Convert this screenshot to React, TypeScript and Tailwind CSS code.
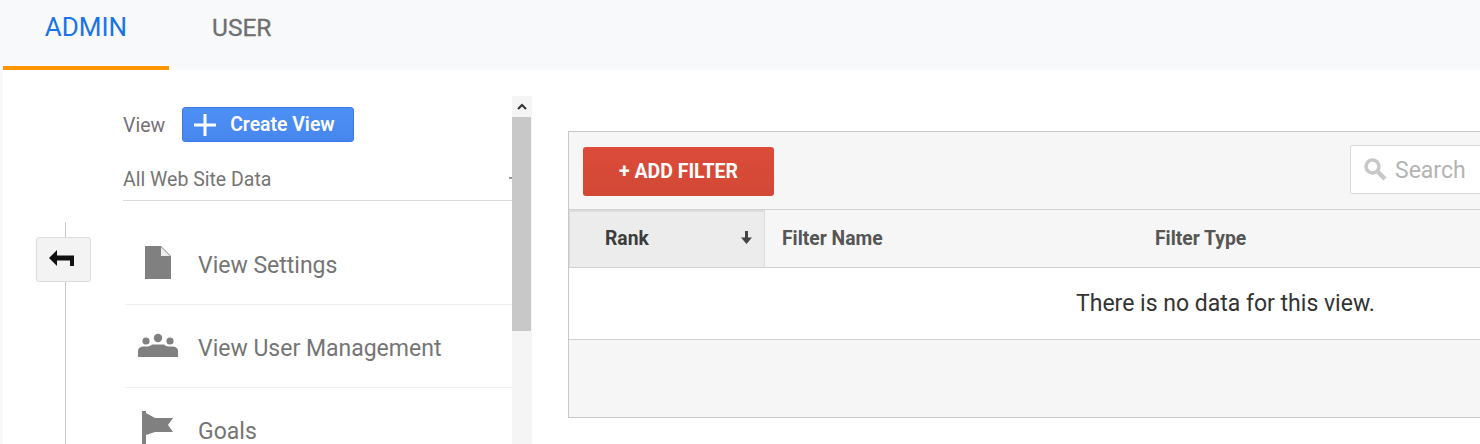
export default function App() {
  const menu = [
    { label: "View Settings", icon: <svg width="26" height="33" viewBox="0 0 26 33"><path d="M0 0H16L26 10V33H0Z" fill="#808080" /><path d="M16 1L25 10H16Z" fill="#ececec" /></svg>, h: "h-[83px]" },
    {
      label: "View User Management",
      icon: (
        <svg width="40" height="26" viewBox="0 0 40 26">
          <circle cx="8" cy="9" r="3.600" fill="#808080" />
          <circle cx="20" cy="6" r="4.200" fill="#808080" />
          <circle cx="32" cy="9" r="3.600" fill="#808080" />
          <path d="M0 25V19Q0 15 5 14.500H10Q13 14 14 12.500H26Q27 14 30 14.500H35Q40 15 40 19V25Z" fill="#808080" />
        </svg>
      ),
      h: "h-[83px]",
    },
    {
      label: "Goals",
      icon: <svg width="34" height="34" viewBox="0 0 34 34"><path d="M1 0H5V34H1Z" fill="#808080" /><path d="M5 2L14 7H32L27 14L32 21H14L5 24Z" fill="#808080" /></svg>,
      h: "h-[60px]",
    },
  ];

  return (
    <div className="flex h-[444px] w-[1480px] flex-col overflow-hidden bg-white font-['Roboto',sans-serif]">
      <div className="flex h-[70px] shrink-0 bg-[#f8f9fa] pl-[3px]">
        <div className="flex h-full w-[166px] items-center justify-center border-b-4 border-[#ff9800] pb-[12px] text-[26px] text-[#1a73e8]">ADMIN</div>
        <div className="ml-[43px] flex h-full items-center pb-[14px] text-[24.500px] text-[#6f6f6f] [-webkit-text-stroke:0.3px_#6f6f6f]">USER</div>
      </div>

      <div className="flex min-h-0 flex-1 border-l-[3px] border-[#f8f9fa]">
        <div className="relative w-[117px] shrink-0">
          <div className="ml-[62px] mt-[152px] h-full w-px bg-[#c8c8c8]" />
          <div className="absolute left-[33px] top-[167px] flex h-[45px] w-[55px] items-start justify-center rounded-[3px] border border-[#dcdcdc] bg-[#f3f3f3] pr-[3px] pt-[12px]">
            <svg width="26" height="17" viewBox="0 0 26 17">
              <path d="M0 8L8 0V5.500H25V16H21V10.500H8V16Z" fill="#111" />
            </svg>
          </div>
        </div>

        <div className="w-[392px] shrink-0">
          <div className="ml-[3px] flex h-[86px] flex-col pt-[37px]">
            <div className="flex items-center">
              <span className="pt-[3px] text-[19.500px] text-[#776f78]">View</span>
              <button className="ml-[17px] flex h-[35px] w-[172px] items-center rounded-[3px] border border-[#3b78e7] bg-linear-to-b from-[#4d90f5] to-[#4787ed] pl-[11px] text-white">
                <svg width="22" height="22" viewBox="0 0 22 22" className="shrink-0">
                  <path d="M9.500 0H12.500V9.500H22V12.500H12.500V22H9.500V12.500H0V9.500H9.500Z" fill="#fff" />
                </svg>
                <span className="ml-[14px] text-[19.400px] font-semibold">Create View</span>
              </button>
            </div>
          </div>
          <div className="relative ml-[3px] flex h-[45px] items-start border-b border-[#dbdbdb] pt-[13px] text-[19.500px] leading-[22px] text-[#757575]">
            All Web Site Data
            <span className="absolute right-0 top-[21px] h-[2px] w-[3px] bg-[#999]" />
          </div>
          <div className="ml-[5px] mt-[21px]">
            {menu.map((m, i) => (
              <div key={m.label} className={`flex ${m.h} items-start pt-[17px] ${i < 2 ? "border-b border-[#efefef]" : ""}`}>
                <div className="flex h-[46px] w-[73px] shrink-0 items-center justify-center pr-[7px]">{m.icon}</div>
                <span className="pt-[13px] text-[23px] leading-[28px] text-[#757575]">{m.label}</span>
              </div>
            ))}
          </div>
        </div>

        <div className="mt-[26px] flex w-[20px] shrink-0 flex-col bg-[#f5f5f5]">
          <div className="flex h-[21px] items-center justify-center">
            <svg width="10" height="7" viewBox="0 0 10 7">
              <path d="M1 6L5 2L9 6" fill="none" stroke="#333" strokeWidth="2" />
            </svg>
          </div>
          <div className="h-[214px] w-[19px] bg-[#c8c8c8]" />
        </div>

        <div className="ml-[36px] mt-[61px] h-[287px] flex-1 border-y border-l border-[#c8c8c8] text-[#555]">
          <div className="flex h-[78px] items-start justify-between border-b border-[#d2d2d2] bg-[#f6f6f6] pl-[14px] pt-[15px]">
            <button className="h-[49px] w-[191px] rounded-[3px] bg-linear-to-b from-[#dd4b39] to-[#d14836] text-[19.500px] font-bold text-white">+ ADD FILTER</button>
            <div className="-mr-[10px] -mt-[2px] flex h-[49px] w-[140px] shrink-0 items-center rounded-l-[2px] border border-[#d9d9d9] bg-white pl-[12px]">
              <svg width="25" height="25" viewBox="0 0 25 25">
                <circle cx="9.500" cy="9.500" r="6.500" fill="none" stroke="#c8c8c8" strokeWidth="3.500" />
                <path d="M14 14L22 22" stroke="#c8c8c8" strokeWidth="4.500" />
              </svg>
              <span className="ml-[7px] pt-[4px] text-[23px] text-[#b4b4b4]">Search</span>
            </div>
          </div>
          <div className="flex h-[58px] border-b border-[#d2d2d2] bg-[#f6f6f6] text-[19.300px] font-bold">
            <div className="flex w-[196px] shrink-0 items-center justify-between border-x border-t-2 border-[#dcdcdc] bg-[#ececec] pl-[35px] pr-[12px] text-[#3c3c3c]">
              <span>Rank</span>
              <svg width="11" height="13" viewBox="0 0 11 13" className="-translate-y-[2px]">
                <path d="M4 0H7V6.500H11L5.500 13L0 6.500H4Z" fill="#444" />
              </svg>
            </div>
            <div className="flex w-[373px] shrink-0 items-center pl-[17px] pt-[2px]">Filter Name</div>
            <div className="flex items-center pl-[17px] pt-[2px]">Filter Type</div>
          </div>
          <div className="flex h-[72px] items-center justify-start border-b border-[#d2d2d2] bg-white pl-[507px] pt-[2px] text-[23px] text-[#333]">There is no data for this view.</div>
          <div className="h-[77px] bg-[#f6f6f6]" />
        </div>
      </div>
    </div>
  );
}
